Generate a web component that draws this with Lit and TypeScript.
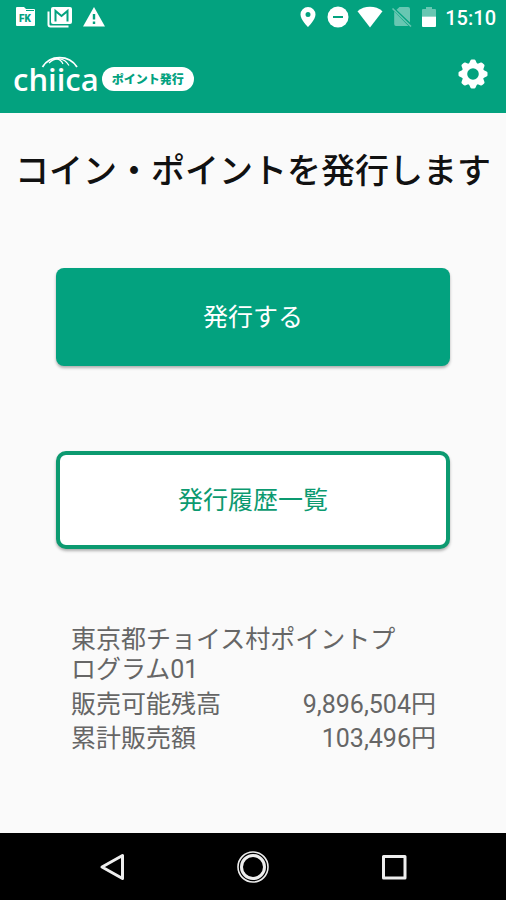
import { LitElement, html, css, svg } from "lit";
import { customElement, property } from "lit/decorators.js";

const JP = css`"Roboto", "Noto Sans CJK JP", sans-serif`;

@customElement("status-bar")
class StatusBar extends LitElement {
  static styles = css`
    :host {
      display: flex;
      align-items: center;
      justify-content: space-between;
      height: 34px;
      padding: 0 10px 0 15px;
      color: #fff;
      font-family: ${JP};
    }
    .group {
      display: flex;
      align-items: center;
    }
    .notices {
      gap: 10px;
    }
    .system {
      gap: 8px;
    }
    svg {
      display: block;
      fill: currentColor;
    }
    .mark {
      font: 900 10px "Roboto", sans-serif;
      fill: #03a27f;
    }
    .cut {
      fill: none;
      stroke: #03a27f;
    }
    .line {
      fill: none;
      stroke: currentColor;
    }
    .faint {
      opacity: 0.4;
    }
    time {
      font-size: 20px;
      font-weight: 500;
      line-height: 24px;
      padding-top: 2px;
    }
  `;

  render() {
    return html`
      <div class="group notices">
        <svg width="22" height="22" viewBox="0 0 22 22" aria-hidden="true">
          <path d="M2 1h7l2 2h8q1 0 1 1v15q0 1-1 1H2q-1 0-1-1V2q0-1 1-1z" />
          <path class="cut" d="M11 4.5h8" stroke-width="1" />
          <text class="mark" x="4" y="16">FK</text>
        </svg>
        <svg width="26" height="22" viewBox="0 0 26 22" aria-hidden="true">
          <path class="line" d="M1.5 5.5v13q0 2 2 2h18" stroke-width="2" />
          <rect x="4" y="1" width="21" height="17" rx="2" />
          <path class="cut" d="M8.5 15.500V5l6 5 6-5v10.500" stroke-width="2" />
        </svg>
        <svg width="22" height="22" viewBox="0 0 22 22" aria-hidden="true">
          <path d="M11 1 22 20.500H0z" />
          <path class="cut" d="M11 8v5.500M11 15.500v2.500" stroke-width="2.400" />
        </svg>
      </div>
      <div class="group system">
        <svg width="22" height="22" viewBox="0 0 22 22" aria-hidden="true">
          <path fill-rule="evenodd" d="M11 1a7.500 7.500 0 0 0-7.500 7.500c0 5.200 7.500 12.500 7.500 12.500s7.500-7.300 7.500-12.500A7.500 7.500 0 0 0 11 1zm0 10a2.500 2.500 0 1 1 0-5 2.500 2.500 0 0 1 0 5z" />
        </svg>
        <svg width="22" height="22" viewBox="0 0 22 22" aria-hidden="true">
          <circle cx="11" cy="11" r="10.500" />
          <path class="cut" d="M6 11h10" stroke-width="2" />
        </svg>
        <svg width="26" height="22" viewBox="0 0 26 22" aria-hidden="true">
          <path d="M13 21.500.5 5.200C4 2.300 8.300.8 13 .8s9 1.500 12.500 4.400z" />
        </svg>
        <svg class="faint" width="22" height="22" viewBox="0 0 22 22" aria-hidden="true">
          <path d="M8.500 1H17q2 0 2 2v13.500L5.500 3.800zM3.200 5.500 17.500 20H5q-1.800 0-1.800-2z" />
          <path class="line" d="M1.500 2.500 20 20.500" stroke-width="1.600" />
        </svg>
        <svg width="16" height="22" viewBox="3 0 16 22" aria-hidden="true">
          <path opacity="0.4" d="M8 1h6v2h3q1 0 1 1v6.500H4V4q0-1 1-1h3z" />
          <path d="M4 10.500h14V20q0 1-1 1H5q-1 0-1-1z" />
        </svg>
        <time>15:10</time>
      </div>
    `;
  }
}

@customElement("app-bar")
class AppBar extends LitElement {
  static styles = css`
    :host {
      display: flex;
      align-items: center;
      justify-content: space-between;
      height: 79px;
      padding: 0 15px 0 13px;
      box-sizing: border-box;
      color: #fff;
    }
    .brand {
      display: flex;
      align-items: center;
      gap: 3px;
      padding-top: 11px;
    }
    .logo {
      position: relative;
      font: 600 31px/32px "Open Sans", "Noto Sans", sans-serif;
    }
    .arc {
      position: absolute;
      left: 28px;
      top: -7px;
      fill: none;
      stroke: currentColor;
    }
    .pill {
      border-radius: 12px;
      padding: 0 10px;
      background: #fff;
      color: #03a27f;
      font: 900 12px/24px "Noto Sans CJK JP", sans-serif;
    }
    button {
      display: block;
      padding: 0;
      border: 0;
      background: none;
      color: inherit;
    }
    svg {
      display: block;
    }
    .tooth {
      fill: currentColor;
    }
    .ring {
      fill: none;
      stroke: currentColor;
    }
  `;

  render() {
    const teeth = [0, 45, 90, 135, 180, 225, 270, 315];
    return html`
      <div class="brand">
        <span class="logo">
          chiica
          <svg class="arc" width="38" height="14" viewBox="0 0 38 14" aria-hidden="true">
            <path d="M1.500 11C9-1.500 28-1.500 36 11" stroke-width="1.800" />
            <path d="M8 7C14 1 23 1 28 9.500" stroke-width="1.300" />
            <path d="M12 3.200C17 2 20.500 4.500 22 8" stroke-width="1.200" />
          </svg>
        </span>
        <span class="pill">ポイント発行</span>
      </div>
      <button type="button" aria-label="設定">
        <svg width="36" height="36" viewBox="-18 -18 36 36" aria-hidden="true">
          <circle class="ring" r="8.500" stroke-width="5.400" />
          ${teeth.map(
            (a) => svg`<path class="tooth" transform="rotate(${a})"
              d="M-4.400-9.500-2.600-13.500Q-2.200-14.500-1.200-14.500H1.200Q2.200-14.500 2.600-13.500L4.400-9.500z" />`
          )}
        </svg>
      </button>
    `;
  }
}

@customElement("nav-bar")
class NavBar extends LitElement {
  static styles = css`
    :host {
      display: grid;
      grid-template-columns: repeat(3, 1fr);
      height: 67px;
      padding: 0 42px;
      background: #000;
    }
    button {
      display: grid;
      place-items: center;
      padding: 0;
      border: 0;
      background: none;
      color: #eee;
    }
    svg {
      fill: none;
      stroke: currentColor;
      stroke-linejoin: round;
    }
  `;

  render() {
    return html`
      <button type="button" aria-label="戻る">
        <svg width="34" height="34" viewBox="0 0 34 34">
          <path d="M27.500 5.500v23L7 17z" stroke-width="3" />
        </svg>
      </button>
      <button type="button" aria-label="ホーム">
        <svg width="34" height="34" viewBox="0 0 34 34">
          <circle cx="17" cy="17" r="15" stroke-width="1.600" />
          <circle cx="17" cy="17" r="11.500" stroke-width="3" />
        </svg>
      </button>
      <button type="button" aria-label="最近使ったアプリ">
        <svg width="34" height="34" viewBox="0 0 34 34">
          <rect x="6.500" y="6.500" width="21.500" height="21.500" stroke-width="3" />
        </svg>
      </button>
    `;
  }
}

@customElement("app-root")
class AppRoot extends LitElement {
  @property() program = "東京都チョイス村ポイントプログラム01";
  @property({ attribute: false }) amounts = [
    { label: "販売可能残高", value: 9896504 },
    { label: "累計販売額", value: 103496 },
  ];

  static styles = css`
    :host {
      display: flex;
      flex-direction: column;
      min-height: 100vh;
      background: #fafafa;
      font-family: ${JP};
    }
    header {
      background: #03a27f;
    }
    main {
      flex: 1;
      padding: 38px 0 32px;
    }
    h1 {
      margin: 0 0 77px;
      text-align: center;
      font-size: 34px;
      line-height: 40px;
      font-weight: 500;
      color: #111;
    }
    .actions {
      display: grid;
      gap: 85px;
      margin: 0 56px;
    }
    .action {
      height: 98px;
      padding: 2px 0 0;
      border: 0;
      border-radius: 8px;
      font: 400 25px/30px ${JP};
      box-shadow: 0 2px 3px rgba(0, 0, 0, 0.3);
    }
    .primary {
      background: #03a27f;
      color: #fff;
    }
    .secondary {
      border: 4px solid #0c9a70;
      border-radius: 10px;
      background: #fff;
      color: #0c9a70;
    }
    .summary {
      margin: 76px 70px 0 71px;
      font-size: 25px;
      line-height: 30px;
      color: #666;
    }
    .program {
      margin: 0 24px 3px 0;
    }
    dl {
      margin: 0;
    }
    .row {
      display: flex;
      justify-content: space-between;
      line-height: 34px;
    }
    dt,
    dd {
      margin: 0;
    }
  `;

  render() {
    return html`
      <header>
        <status-bar></status-bar>
        <app-bar></app-bar>
      </header>
      <main>
        <h1>コイン・ポイントを発行します</h1>
        <div class="actions">
          <button class="action primary" type="button">発行する</button>
          <button class="action secondary" type="button">発行履歴一覧</button>
        </div>
        <section class="summary">
          <p class="program">${this.program}</p>
          <dl>
            ${this.amounts.map(
              (a) => html`<div class="row">
                <dt>${a.label}</dt>
                <dd>${a.value.toLocaleString("en-US")}円</dd>
              </div>`
            )}
          </dl>
        </section>
      </main>
      <nav-bar></nav-bar>
    `;
  }
}
